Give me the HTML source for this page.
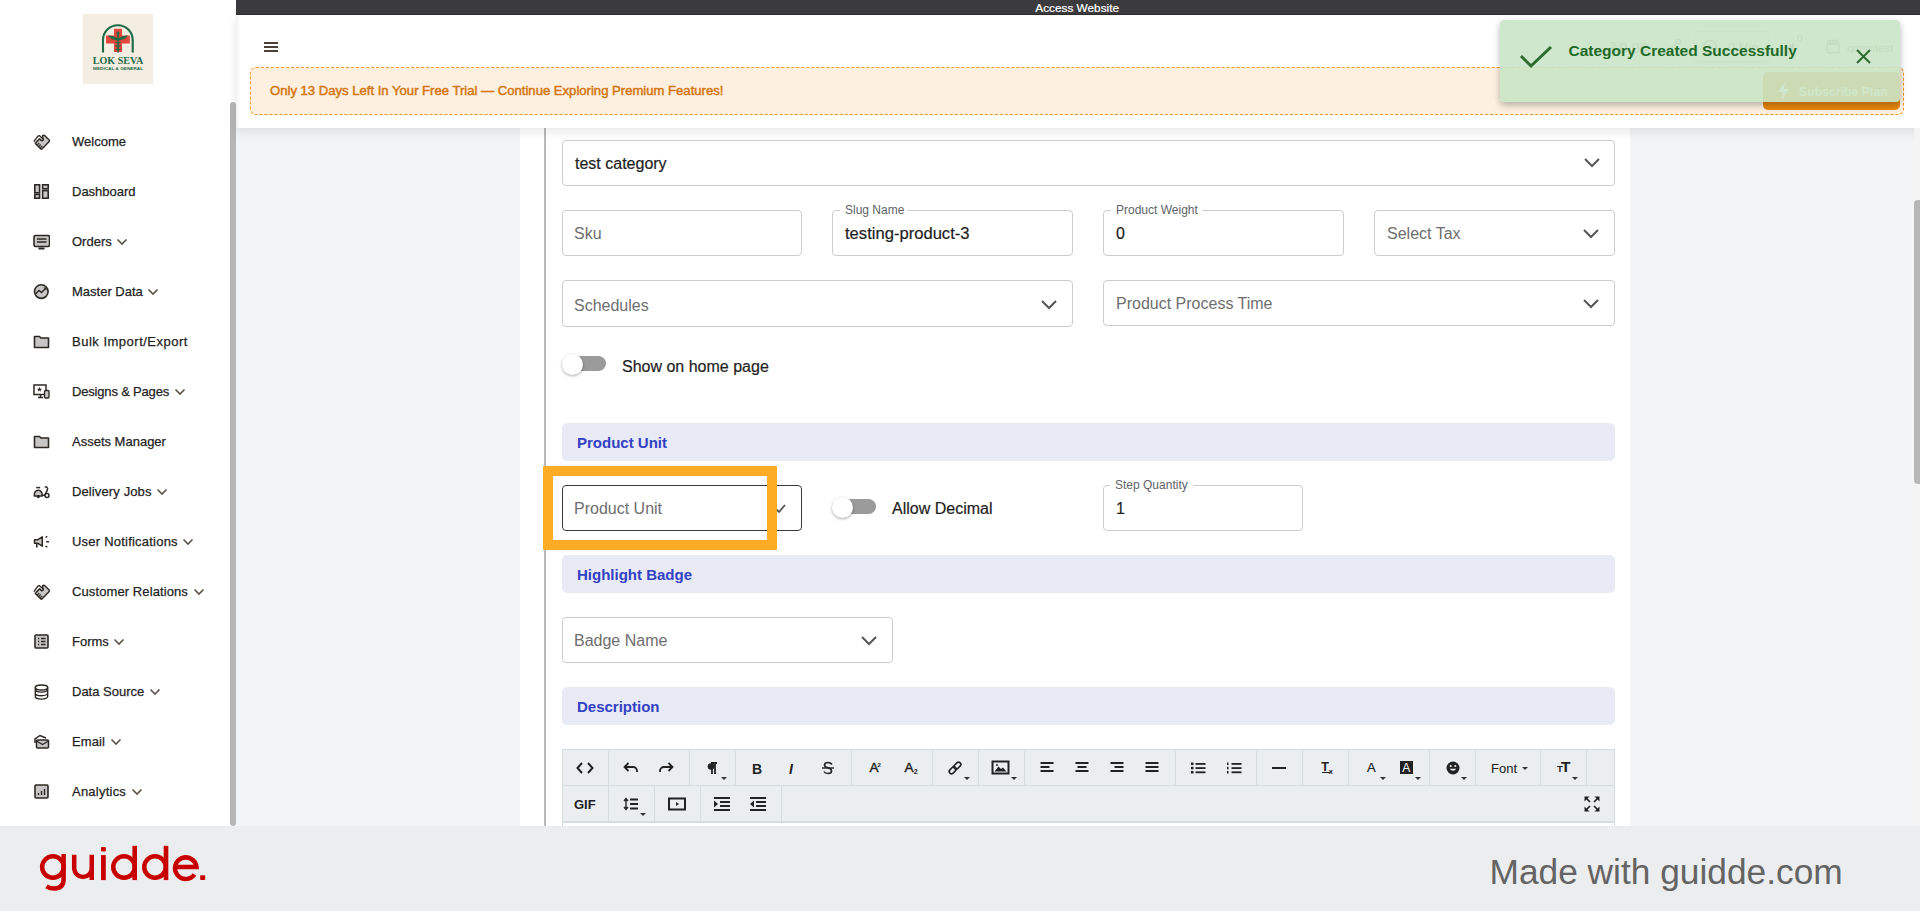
<!DOCTYPE html>
<html><head><meta charset="utf-8">
<style>
*{box-sizing:border-box;margin:0;padding:0}
html,body{width:1920px;height:911px;overflow:hidden;background:#f3f4f6;font-family:"Liberation Sans",sans-serif;position:relative}
.a{position:absolute;display:block}
.t{position:absolute;white-space:nowrap;line-height:1}
</style></head><body>

<div class="a" style="left:236px;top:128px;width:1684px;height:698px;background:#f3f4f6"></div>
<div class="a" style="left:520px;top:128px;width:1110px;height:698px;background:#fff"></div>
<div class="a" style="left:544px;top:128px;width:2px;height:698px;background:#b9b9b9"></div>
<div class="a" style="left:562px;top:140px;width:1053px;height:46px;border:1px solid #cdcdcd;border-radius:4px;background:#fff"></div>
<div class="t" style="left:575px;top:155.96px;font-size:16px;color:#1e1e1e;-webkit-text-stroke:0.2px #1e1e1e">test category</div>
<svg class="a" style="left:1583.0px;top:157.2px;" width="18" height="11" viewBox="0 0 18 11"><path d="M2 2 L9.0 9 L16 2" fill="none" stroke="#555" stroke-width="2"/></svg>
<div class="a" style="left:562px;top:210px;width:240px;height:46px;border:1px solid #cdcdcd;border-radius:4px;background:#fff"></div>
<div class="t" style="left:574px;top:226.46px;font-size:16px;color:#6e6e6e;">Sku</div>
<div class="a" style="left:832px;top:210px;width:241px;height:46px;border:1px solid #cdcdcd;border-radius:4px;background:#fff"></div>
<div class="a" style="left:840px;top:209px;width:67px;height:3px;background:#fff"></div>
<div class="t" style="left:845px;top:203.84px;font-size:12px;color:#5f6368;">Slug Name</div>
<div class="t" style="left:845px;top:225.95px;font-size:16.6px;color:#1e1e1e;-webkit-text-stroke:0.2px #1e1e1e">testing-product-3</div>
<div class="a" style="left:1103px;top:210px;width:241px;height:46px;border:1px solid #cdcdcd;border-radius:4px;background:#fff"></div>
<div class="a" style="left:1111px;top:209px;width:91px;height:3px;background:#fff"></div>
<div class="t" style="left:1116px;top:203.84px;font-size:12px;color:#5f6368;">Product Weight</div>
<div class="t" style="left:1116px;top:226.46px;font-size:16px;color:#1e1e1e;-webkit-text-stroke:0.2px #1e1e1e">0</div>
<div class="a" style="left:1374px;top:210px;width:241px;height:46px;border:1px solid #cdcdcd;border-radius:4px;background:#fff"></div>
<div class="t" style="left:1387px;top:226.46px;font-size:16px;color:#6e6e6e;">Select Tax</div>
<svg class="a" style="left:1582.0px;top:227.5px;" width="18" height="11" viewBox="0 0 18 11"><path d="M2 2 L9.0 9 L16 2" fill="none" stroke="#555" stroke-width="2"/></svg>
<div class="a" style="left:562px;top:280px;width:511px;height:47px;border:1px solid #cdcdcd;border-radius:4px;background:#fff"></div>
<div class="t" style="left:574px;top:298.46px;font-size:16px;color:#6e6e6e;">Schedules</div>
<svg class="a" style="left:1040.0px;top:298.5px;" width="18" height="11" viewBox="0 0 18 11"><path d="M2 2 L9.0 9 L16 2" fill="none" stroke="#555" stroke-width="2"/></svg>
<div class="a" style="left:1103px;top:280px;width:512px;height:46px;border:1px solid #cdcdcd;border-radius:4px;background:#fff"></div>
<div class="t" style="left:1116px;top:295.96px;font-size:16px;color:#6e6e6e;">Product Process Time</div>
<svg class="a" style="left:1582.0px;top:297.5px;" width="18" height="11" viewBox="0 0 18 11"><path d="M2 2 L9.0 9 L16 2" fill="none" stroke="#555" stroke-width="2"/></svg>
<div class="a" style="left:573px;top:355.5px;width:33px;height:15px;background:#9b9b9b;border-radius:8px"></div>
<div class="a" style="left:562px;top:353.5px;width:21px;height:21px;background:#fff;border-radius:50%;box-shadow:0 1px 3px rgba(0,0,0,.35)"></div>
<div class="t" style="left:622px;top:358.96px;font-size:16px;color:#1e1e1e;-webkit-text-stroke:0.2px #1e1e1e">Show on home page</div>
<div class="a" style="left:562px;top:423px;width:1053px;height:38px;background:#e8eaf6;border-radius:5px"></div>
<div class="t" style="left:577px;top:435.30px;font-size:15px;color:#3341c4;font-weight:bold;">Product Unit</div>
<div class="a" style="left:562px;top:555px;width:1053px;height:38px;background:#e8eaf6;border-radius:5px"></div>
<div class="t" style="left:577px;top:567.30px;font-size:15px;color:#3341c4;font-weight:bold;">Highlight Badge</div>
<div class="a" style="left:562px;top:687px;width:1053px;height:38px;background:#e8eaf6;border-radius:5px"></div>
<div class="t" style="left:577px;top:699.30px;font-size:15px;color:#3341c4;font-weight:bold;">Description</div>
<div class="a" style="left:562px;top:485px;width:240px;height:46px;border:1px solid #3a3a3a;border-radius:4px;background:#fff"></div>
<div class="t" style="left:574px;top:501.46px;font-size:16px;color:#6e6e6e;">Product Unit</div>
<svg class="a" style="left:772px;top:502px;" width="16" height="12" viewBox="0 0 16 12"><path d="M4 7 L7 10 L13 3" fill="none" stroke="#555" stroke-width="1.8"/></svg>
<div class="a" style="left:843px;top:499px;width:33px;height:15px;background:#9b9b9b;border-radius:8px"></div>
<div class="a" style="left:832px;top:497px;width:21px;height:21px;background:#fff;border-radius:50%;box-shadow:0 1px 3px rgba(0,0,0,.35)"></div>
<div class="t" style="left:892px;top:501.46px;font-size:16px;color:#1e1e1e;-webkit-text-stroke:0.2px #1e1e1e">Allow Decimal</div>
<div class="a" style="left:1103px;top:485px;width:200px;height:46px;border:1px solid #cdcdcd;border-radius:4px;background:#fff"></div>
<div class="a" style="left:1110px;top:484px;width:83px;height:3px;background:#fff"></div>
<div class="t" style="left:1115px;top:478.84px;font-size:12px;color:#5f6368;">Step Quantity</div>
<div class="t" style="left:1116px;top:501.46px;font-size:16px;color:#1e1e1e;-webkit-text-stroke:0.2px #1e1e1e">1</div>
<div class="a" style="left:543px;top:466px;width:234px;height:84px;border:10px solid #fbab24"></div>
<div class="a" style="left:562px;top:617px;width:331px;height:46px;border:1px solid #cdcdcd;border-radius:4px;background:#fff"></div>
<div class="t" style="left:574px;top:633.46px;font-size:16px;color:#6e6e6e;">Badge Name</div>
<svg class="a" style="left:860.0px;top:634.5px;" width="18" height="11" viewBox="0 0 18 11"><path d="M2 2 L9.0 9 L16 2" fill="none" stroke="#555" stroke-width="2"/></svg>
<div class="a" style="left:562px;top:749px;width:1053px;height:77px;background:#eaeef0;border:1px solid #d5dde0;border-bottom:none"></div>
<div class="a" style="left:562px;top:785px;width:1053px;height:1px;background:#d5dde0"></div>
<div class="a" style="left:562px;top:821px;width:1053px;height:2px;background:#d5dde0"></div>
<div class="a" style="left:563px;top:823px;width:1051px;height:3px;background:#fff"></div>
<div class="a" style="left:608px;top:750px;width:1px;height:35px;background:#d5dde0"></div>
<div class="a" style="left:689px;top:750px;width:1px;height:35px;background:#d5dde0"></div>
<div class="a" style="left:735px;top:750px;width:1px;height:35px;background:#d5dde0"></div>
<div class="a" style="left:851px;top:750px;width:1px;height:35px;background:#d5dde0"></div>
<div class="a" style="left:932px;top:750px;width:1px;height:35px;background:#d5dde0"></div>
<div class="a" style="left:978px;top:750px;width:1px;height:35px;background:#d5dde0"></div>
<div class="a" style="left:1024px;top:750px;width:1px;height:35px;background:#d5dde0"></div>
<div class="a" style="left:1175px;top:750px;width:1px;height:35px;background:#d5dde0"></div>
<div class="a" style="left:1256px;top:750px;width:1px;height:35px;background:#d5dde0"></div>
<div class="a" style="left:1302px;top:750px;width:1px;height:35px;background:#d5dde0"></div>
<div class="a" style="left:1348px;top:750px;width:1px;height:35px;background:#d5dde0"></div>
<div class="a" style="left:1429px;top:750px;width:1px;height:35px;background:#d5dde0"></div>
<div class="a" style="left:1475px;top:750px;width:1px;height:35px;background:#d5dde0"></div>
<div class="a" style="left:1540px;top:750px;width:1px;height:35px;background:#d5dde0"></div>
<div class="a" style="left:1586px;top:750px;width:1px;height:35px;background:#d5dde0"></div>
<div class="a" style="left:608px;top:786px;width:1px;height:35px;background:#d5dde0"></div>
<div class="a" style="left:654px;top:786px;width:1px;height:35px;background:#d5dde0"></div>
<div class="a" style="left:700px;top:786px;width:1px;height:35px;background:#d5dde0"></div>
<div class="a" style="left:781px;top:786px;width:1px;height:35px;background:#d5dde0"></div>
<svg class="a" style="left:576.0px;top:761.0px" width="18" height="14" viewBox="0 0 18 14"><path d="M6 2 L1.5 7 L6 12 M12 2 L16.5 7 L12 12" fill="none" stroke="#222" stroke-width="2"/></svg>
<svg class="a" style="left:623.0px;top:761.0px" width="16" height="14" viewBox="0 0 16 14"><path d="M2 6 h8 a4 4 0 0 1 4 4 v1" fill="none" stroke="#222" stroke-width="1.8"/><path d="M5.5 2 L1.5 6 L5.5 10" fill="none" stroke="#222" stroke-width="1.8"/></svg>
<svg class="a" style="left:658.0px;top:761.0px" width="16" height="14" viewBox="0 0 16 14"><path d="M14 6 h-8 a4 4 0 0 0 -4 4 v1" fill="none" stroke="#222" stroke-width="1.8"/><path d="M10.5 2 L14.5 6 L10.5 10" fill="none" stroke="#222" stroke-width="1.8"/></svg>
<svg class="a" style="left:706.0px;top:761.0px" width="12" height="14" viewBox="0 0 12 14"><path d="M5 2 h6 M6 2 v11 M9 2 v11" stroke="#222" stroke-width="1.8"/><circle cx="5" cy="5.5" r="3.3" fill="#222"/></svg>
<svg class="a" style="left:721px;top:777px" width="6" height="4" viewBox="0 0 6 4"><path d="M0 0 h6 l-3 3z" fill="#333"/></svg>
<svg class="a" style="left:821.0px;top:761.0px" width="14" height="14" viewBox="0 0 14 14"><path d="M11 3.5 Q9.5 1.5 7 1.5 Q3.5 1.5 3.5 4 Q3.5 6 7 6.8 Q10.5 7.6 10.5 10 Q10.5 12.5 7 12.5 Q4 12.5 3 10.5" fill="none" stroke="#222" stroke-width="1.6"/><path d="M1 7 h12" stroke="#222" stroke-width="1.4"/></svg>
<svg class="a" style="left:946.0px;top:759.0px" width="18" height="18" viewBox="0 0 18 18"><g transform="rotate(-45 9 9)" fill="none" stroke="#222" stroke-width="1.6"><rect x="1.8" y="6.7" width="7.9" height="4.6" rx="2.3"/><rect x="8.3" y="6.7" width="7.9" height="4.6" rx="2.3"/></g></svg>
<svg class="a" style="left:964px;top:777px" width="6" height="4" viewBox="0 0 6 4"><path d="M0 0 h6 l-3 3z" fill="#333"/></svg>
<svg class="a" style="left:991.0px;top:760.0px" width="20" height="16" viewBox="0 0 20 16"><rect x="1.5" y="1.5" width="16" height="12" fill="none" stroke="#222" stroke-width="2"/><path d="M3.5 11.5 L7.5 6.5 L10 9 L12 7.5 L15.5 11.5z" fill="#222"/><circle cx="6" cy="5" r="1" fill="#222"/></svg>
<svg class="a" style="left:1011px;top:777px" width="6" height="4" viewBox="0 0 6 4"><path d="M0 0 h6 l-3 3z" fill="#333"/></svg>
<svg class="a" style="left:1040.0px;top:761.0px" width="14" height="14" viewBox="0 0 14 14"><rect x="0.5" y="1" width="13" height="2" fill="#222"/><rect x="0.5" y="5" width="9" height="2" fill="#222"/><rect x="0.5" y="9" width="13" height="2" fill="#222"/></svg>
<svg class="a" style="left:1075.0px;top:761.0px" width="14" height="14" viewBox="0 0 14 14"><rect x="0.5" y="1" width="13" height="2" fill="#222"/><rect x="2.5" y="5" width="9" height="2" fill="#222"/><rect x="0.5" y="9" width="13" height="2" fill="#222"/></svg>
<svg class="a" style="left:1110.0px;top:761.0px" width="14" height="14" viewBox="0 0 14 14"><rect x="0.5" y="1" width="13" height="2" fill="#222"/><rect x="4.5" y="5" width="9" height="2" fill="#222"/><rect x="0.5" y="9" width="13" height="2" fill="#222"/></svg>
<svg class="a" style="left:1145.0px;top:761.0px" width="14" height="14" viewBox="0 0 14 14"><rect x="0.5" y="1" width="13" height="2" fill="#222"/><rect x="0.5" y="5" width="13" height="2" fill="#222"/><rect x="0.5" y="9" width="13" height="2" fill="#222"/></svg>
<svg class="a" style="left:1190.0px;top:761.0px" width="16" height="14" viewBox="0 0 16 14"><g fill="#222"><rect x="1" y="1.5" width="2.5" height="2.5"/><rect x="1" y="5.8" width="2.5" height="2.5"/><rect x="1" y="10" width="2.5" height="2.5"/><rect x="5.5" y="2" width="10" height="1.8"/><rect x="5.5" y="6.2" width="10" height="1.8"/><rect x="5.5" y="10.4" width="10" height="1.8"/></g></svg>
<svg class="a" style="left:1226.0px;top:761.0px" width="16" height="14" viewBox="0 0 16 14"><g fill="#222"><rect x="1" y="1.5" width="1.5" height="2.5"/><rect x="1" y="5.8" width="1.5" height="2.5"/><rect x="1" y="10" width="1.5" height="2.5"/><rect x="5.5" y="2" width="10" height="1.8"/><rect x="5.5" y="6.2" width="10" height="1.8"/><rect x="5.5" y="10.4" width="10" height="1.8"/></g></svg>
<svg class="a" style="left:1271.0px;top:765.0px" width="16" height="6" viewBox="0 0 16 6"><rect x="1" y="2" width="14" height="2" fill="#222"/></svg>
<svg class="a" style="left:1380px;top:777px" width="6" height="4" viewBox="0 0 6 4"><path d="M0 0 h6 l-3 3z" fill="#333"/></svg>
<svg class="a" style="left:1415px;top:777px" width="6" height="4" viewBox="0 0 6 4"><path d="M0 0 h6 l-3 3z" fill="#333"/></svg>
<svg class="a" style="left:1445.5px;top:760.6px" width="14" height="14" viewBox="0 0 14 14"><circle cx="7" cy="7" r="6.5" fill="#222"/><circle cx="4.7" cy="5" r="1.1" fill="#eaeef0"/><circle cx="9.3" cy="5" r="1.1" fill="#eaeef0"/><path d="M3.6 7.8 Q7 11.8 10.4 7.8z" fill="#eaeef0"/></svg>
<svg class="a" style="left:1461px;top:777px" width="6" height="4" viewBox="0 0 6 4"><path d="M0 0 h6 l-3 3z" fill="#333"/></svg>
<svg class="a" style="left:1522px;top:767px" width="6" height="4" viewBox="0 0 6 4"><path d="M0 0 h6 l-3 3z" fill="#333"/></svg>
<svg class="a" style="left:1572px;top:777px" width="6" height="4" viewBox="0 0 6 4"><path d="M0 0 h6 l-3 3z" fill="#333"/></svg>
<svg class="a" style="left:623.0px;top:797.0px" width="16" height="14" viewBox="0 0 16 14"><path d="M3 2 v10 M1 4 L3 1.5 L5 4 M1 10 L3 12.5 L5 10" fill="none" stroke="#222" stroke-width="1.4"/><path d="M7 2.5 h8 M7 7 h8 M7 11.5 h8" stroke="#222" stroke-width="1.8"/></svg>
<svg class="a" style="left:640px;top:813px" width="6" height="4" viewBox="0 0 6 4"><path d="M0 0 h6 l-3 3z" fill="#333"/></svg>
<svg class="a" style="left:668.0px;top:797.0px" width="18" height="14" viewBox="0 0 18 14"><rect x="1" y="1.5" width="16" height="11" fill="none" stroke="#222" stroke-width="2"/><path d="M8 5 L11 7 L8 9z" fill="#222"/></svg>
<svg class="a" style="left:713.0px;top:796.0px" width="18" height="16" viewBox="0 0 18 16"><g fill="#222"><rect x="1" y="1" width="16" height="2"/><rect x="7" y="5" width="10" height="2"/><rect x="7" y="9" width="10" height="2"/><rect x="1" y="13" width="16" height="2"/><path d="M1 4.5 L5 8 L1 11.5z"/></g></svg>
<svg class="a" style="left:749.0px;top:796.0px" width="18" height="16" viewBox="0 0 18 16"><g fill="#222"><rect x="1" y="1" width="16" height="2"/><rect x="7" y="5" width="10" height="2"/><rect x="7" y="9" width="10" height="2"/><rect x="1" y="13" width="16" height="2"/><path d="M5 4.5 L1 8 L5 11.5z"/></g></svg>
<svg class="a" style="left:1583.5px;top:795.5px" width="16" height="16" viewBox="0 0 16 16"><g fill="#222"><path d="M0.5 0.5 H5.5 L0.5 5.5z"/><path d="M15.5 0.5 H10.5 L15.5 5.5z"/><path d="M0.5 15.5 H5.5 L0.5 10.5z"/><path d="M15.5 15.5 H10.5 L15.5 10.5z"/></g><path d="M2.5 2.5 L6 6 M13.5 2.5 L10 6 M2.5 13.5 L6 10 M13.5 13.5 L10 10" stroke="#222" stroke-width="1.7"/></svg>
<div class="a" style="left:0px;top:0px;width:236px;height:826px;background:#fff"></div>
<div class="a" style="left:230px;top:102px;width:6px;height:724px;background:#b6b6b6;border-radius:3px"></div>
<div class="a" style="left:83px;top:14px;width:70px;height:70px;background:#f4ede2"></div>
<svg class="a" style="left:83px;top:14px;" width="70" height="70" viewBox="0 0 70 70">
<path d="M20 38.5 V26.1 A14.85 14.85 0 0 1 49.7 26.1 V38.5" fill="none" stroke="#1d6a47" stroke-width="2.1"/>
<path d="M31 14.7 h8 v6.9 h7.8 v7.9 h-7.8 v8.5 h-8 v-8.5 h-8 v-7.9 h8z" fill="#e2473b"/>
<path d="M25 21.5 Q30 21 35 24.5 Q40 21 45 21.5 Q42 26 35 26.5 Q28 26 25 21.5z" fill="#1d6a47"/>
<path d="M35 18.5 V38.5" stroke="#1d6a47" stroke-width="1.6"/>
<path d="M32.5 28 Q35 30 37.5 28 M32.5 31.5 Q35 33.5 37.5 31.5 M32.5 35 Q35 37 37.5 35" fill="none" stroke="#1d6a47" stroke-width="1.2"/>
<circle cx="35" cy="19" r="1.5" fill="#1d6a47"/>
<text x="35" y="49.8" text-anchor="middle" font-family="Liberation Serif" font-weight="bold" font-size="11.2" fill="#1d6a47" textLength="50.5" lengthAdjust="spacingAndGlyphs">LOK SEVA</text>
<text x="35" y="55.8" text-anchor="middle" font-family="Liberation Sans" font-weight="bold" font-size="4" fill="#1d6a47" textLength="50" lengthAdjust="spacingAndGlyphs">MEDICAL &amp; GENERAL</text>
</svg>
<svg class="a" style="left:33px;top:133.0px" width="17" height="17" viewBox="0 0 17 17"><path d="M9.6 2.6 Q10.6 1.8 11.6 2.6 L16.2 7 Q16.8 7.8 16.2 8.6 L9.2 15.8 Q8.4 16.6 7.6 15.8 L2.6 10.8 Q2 10 2.8 9.4 L6.7 5.7 L8.2 7.2 Q8.9 7.8 9.6 7.4 Q10.5 6.8 10 5.8z" fill="#c6c6c6" stroke="#2c2823" stroke-width="1.4" stroke-linejoin="round"/><path d="M0.9 8.6 L5 3.2 Q5.8 2.3 6.8 2.9 L10 5.8 Q10.5 6.8 9.6 7.4 Q8.9 7.8 8.2 7.2 L6.7 5.7 L2.8 9.6" fill="#fff" stroke="#2c2823" stroke-width="1.4" stroke-linejoin="round"/><path d="M4 12.2 L6.2 10 M5.5 13.7 L7.7 11.5 M7 15.2 L9.2 13" stroke="#2c2823" stroke-width="1.2"/></svg>
<div class="t" style="left:72px;top:135.20px;font-size:13px;color:#1f1f1f;letter-spacing:0px;-webkit-text-stroke:0.25px #1f1f1f">Welcome</div>
<svg class="a" style="left:33px;top:183.0px" width="17" height="17" viewBox="0 0 17 17"><g fill="#c6c6c6" stroke="#2c2823" stroke-width="1.6"><rect x="1.8" y="1.8" width="4.8" height="8"/><rect x="9.6" y="1.8" width="5.6" height="4"/><rect x="1.8" y="11.4" width="4.8" height="3.8"/><rect x="9.6" y="7.6" width="5.6" height="7.6"/></g></svg>
<div class="t" style="left:72px;top:185.20px;font-size:13px;color:#1f1f1f;letter-spacing:0px;-webkit-text-stroke:0.25px #1f1f1f">Dashboard</div>
<svg class="a" style="left:33px;top:233.0px" width="17" height="17" viewBox="0 0 17 17"><rect x="1" y="2.5" width="15.5" height="11" rx="1.5" fill="#c6c6c6" stroke="#2c2823" stroke-width="1.6"/><path d="M5.5 15.5 h6" stroke="#2c2823" stroke-width="2"/><path d="M4 6 h9.5 M4 9 h9.5" stroke="#2c2823" stroke-width="1.3"/></svg>
<div class="t" style="left:72px;top:235.20px;font-size:13px;color:#1f1f1f;letter-spacing:0px;-webkit-text-stroke:0.25px #1f1f1f">Orders</div>
<svg class="a" style="left:116.2px;top:237.5px" width="12" height="8" viewBox="0 0 12 8"><path d="M1.5 1.5 L6 6 L10.5 1.5" fill="none" stroke="#5b5245" stroke-width="1.6"/></svg>
<svg class="a" style="left:33px;top:283.0px" width="17" height="17" viewBox="0 0 17 17"><circle cx="8.3" cy="8.6" r="6.8" fill="#c6c6c6" stroke="#2c2823" stroke-width="1.6"/><path d="M2.5 11 L6 7.5 L8.5 9.5 L12.5 5.5" fill="none" stroke="#2c2823" stroke-width="1.4"/><path d="M10.5 4.5 h3 v3z" fill="#2c2823"/></svg>
<div class="t" style="left:72px;top:285.20px;font-size:13px;color:#1f1f1f;letter-spacing:0px;-webkit-text-stroke:0.25px #1f1f1f">Master Data</div>
<svg class="a" style="left:147.3px;top:287.5px" width="12" height="8" viewBox="0 0 12 8"><path d="M1.5 1.5 L6 6 L10.5 1.5" fill="none" stroke="#5b5245" stroke-width="1.6"/></svg>
<svg class="a" style="left:33px;top:333.0px" width="17" height="17" viewBox="0 0 17 17"><path d="M1.5 3.5 h5 l1.5 1.5 h7.5 v9.5 h-14z" fill="#c6c6c6" stroke="#2c2823" stroke-width="1.6" stroke-linejoin="round"/></svg>
<div class="t" style="left:72px;top:335.20px;font-size:13px;color:#1f1f1f;letter-spacing:0.5px;-webkit-text-stroke:0.25px #1f1f1f">Bulk Import/Export</div>
<svg class="a" style="left:33px;top:383.0px" width="17" height="17" viewBox="0 0 17 17"><rect x="1" y="2" width="12" height="9.5" fill="none" stroke="#2c2823" stroke-width="1.5"/><path d="M5 14.5 h5 M7.5 11.5 v3" stroke="#2c2823" stroke-width="1.5"/><rect x="11.5" y="7.5" width="4.5" height="7.5" rx="1" fill="#c6c6c6" stroke="#2c2823" stroke-width="1.3"/><path d="M6.5 4 l.8 1.8 h1.8 l-1.5 1.1 .6 1.8 -1.7 -1.1 -1.7 1.1 .6 -1.8 -1.5 -1.1 h1.8z" fill="#2c2823"/></svg>
<div class="t" style="left:72px;top:385.20px;font-size:13px;color:#1f1f1f;letter-spacing:-0.18px;-webkit-text-stroke:0.25px #1f1f1f">Designs &amp; Pages</div>
<svg class="a" style="left:173.6px;top:387.5px" width="12" height="8" viewBox="0 0 12 8"><path d="M1.5 1.5 L6 6 L10.5 1.5" fill="none" stroke="#5b5245" stroke-width="1.6"/></svg>
<svg class="a" style="left:33px;top:433.0px" width="17" height="17" viewBox="0 0 17 17"><path d="M1.5 3.5 h5 l1.5 1.5 h7.5 v9.5 h-14z" fill="#c6c6c6" stroke="#2c2823" stroke-width="1.6" stroke-linejoin="round"/></svg>
<div class="t" style="left:72px;top:435.20px;font-size:13px;color:#1f1f1f;letter-spacing:0px;-webkit-text-stroke:0.25px #1f1f1f">Assets Manager</div>
<svg class="a" style="left:33px;top:483.0px" width="17" height="17" viewBox="0 0 17 17"><path d="M3.2 4.6 H7.2" stroke="#2c2823" stroke-width="1.5"/><path d="M1.2 13 Q1.2 7.2 5.3 7.2 Q9.3 7.2 9.3 13z" fill="#c6c6c6" stroke="#2c2823" stroke-width="1.5" stroke-linejoin="round"/><circle cx="5.3" cy="13.6" r="1.6" fill="#2c2823"/><path d="M9.3 12.2 H11.8 L14.3 7.2 Q15.2 5 13.8 4 H11.8" fill="none" stroke="#2c2823" stroke-width="1.5" stroke-linejoin="round"/><circle cx="14" cy="12.6" r="2" fill="#fff" stroke="#2c2823" stroke-width="1.5"/></svg>
<div class="t" style="left:72px;top:485.20px;font-size:13px;color:#1f1f1f;letter-spacing:0.12px;-webkit-text-stroke:0.25px #1f1f1f">Delivery Jobs</div>
<svg class="a" style="left:156.1px;top:487.5px" width="12" height="8" viewBox="0 0 12 8"><path d="M1.5 1.5 L6 6 L10.5 1.5" fill="none" stroke="#5b5245" stroke-width="1.6"/></svg>
<svg class="a" style="left:33px;top:533.0px" width="17" height="17" viewBox="0 0 17 17"><path d="M1.5 6.8 H4.5 L9.3 3.8 V13.2 L4.5 10.2 H1.5z" fill="#c6c6c6" stroke="#2c2823" stroke-width="1.5" stroke-linejoin="round"/><path d="M3.8 10 V14.6" stroke="#2c2823" stroke-width="1.6"/><path d="M12.5 4.5 L14.3 3.2 M13.2 8.8 H16 M12.5 13 L14.3 14.3" stroke="#2c2823" stroke-width="1.4"/></svg>
<div class="t" style="left:72px;top:535.20px;font-size:13px;color:#1f1f1f;letter-spacing:0.22px;-webkit-text-stroke:0.25px #1f1f1f">User Notifications</div>
<svg class="a" style="left:182.4px;top:537.5px" width="12" height="8" viewBox="0 0 12 8"><path d="M1.5 1.5 L6 6 L10.5 1.5" fill="none" stroke="#5b5245" stroke-width="1.6"/></svg>
<svg class="a" style="left:33px;top:583.0px" width="17" height="17" viewBox="0 0 17 17"><path d="M9.6 2.6 Q10.6 1.8 11.6 2.6 L16.2 7 Q16.8 7.8 16.2 8.6 L9.2 15.8 Q8.4 16.6 7.6 15.8 L2.6 10.8 Q2 10 2.8 9.4 L6.7 5.7 L8.2 7.2 Q8.9 7.8 9.6 7.4 Q10.5 6.8 10 5.8z" fill="#c6c6c6" stroke="#2c2823" stroke-width="1.4" stroke-linejoin="round"/><path d="M0.9 8.6 L5 3.2 Q5.8 2.3 6.8 2.9 L10 5.8 Q10.5 6.8 9.6 7.4 Q8.9 7.8 8.2 7.2 L6.7 5.7 L2.8 9.6" fill="#fff" stroke="#2c2823" stroke-width="1.4" stroke-linejoin="round"/><path d="M4 12.2 L6.2 10 M5.5 13.7 L7.7 11.5 M7 15.2 L9.2 13" stroke="#2c2823" stroke-width="1.2"/></svg>
<div class="t" style="left:72px;top:585.20px;font-size:13px;color:#1f1f1f;letter-spacing:0.1px;-webkit-text-stroke:0.25px #1f1f1f">Customer Relations</div>
<svg class="a" style="left:192.5px;top:587.5px" width="12" height="8" viewBox="0 0 12 8"><path d="M1.5 1.5 L6 6 L10.5 1.5" fill="none" stroke="#5b5245" stroke-width="1.6"/></svg>
<svg class="a" style="left:33px;top:633.0px" width="17" height="17" viewBox="0 0 17 17"><rect x="2" y="2" width="13" height="13" rx="1" fill="#c6c6c6" stroke="#2c2823" stroke-width="1.6"/><path d="M5 5.5 h1.2 M8 5.5 h4.5 M5 8.5 h1.2 M8 8.5 h4.5 M5 11.5 h1.2 M8 11.5 h4.5" stroke="#2c2823" stroke-width="1.3"/></svg>
<div class="t" style="left:72px;top:635.20px;font-size:13px;color:#1f1f1f;letter-spacing:0px;-webkit-text-stroke:0.25px #1f1f1f">Forms</div>
<svg class="a" style="left:113.3px;top:637.5px" width="12" height="8" viewBox="0 0 12 8"><path d="M1.5 1.5 L6 6 L10.5 1.5" fill="none" stroke="#5b5245" stroke-width="1.6"/></svg>
<svg class="a" style="left:33px;top:683.0px" width="17" height="17" viewBox="0 0 17 17"><ellipse cx="8.5" cy="4.6" rx="6.2" ry="2.5" fill="none" stroke="#2c2823" stroke-width="1.5"/><path d="M2.3 4.6 V13.6 A6.2 2.5 0 0 0 14.7 13.6 V4.6 M2.3 6.6 A6.2 2.5 0 0 0 14.7 6.6 M2.3 10.2 A6.2 2.5 0 0 0 14.7 10.2" fill="none" stroke="#2c2823" stroke-width="1.4"/></svg>
<div class="t" style="left:72px;top:685.20px;font-size:13px;color:#1f1f1f;letter-spacing:0px;-webkit-text-stroke:0.25px #1f1f1f">Data Source</div>
<svg class="a" style="left:148.8px;top:687.5px" width="12" height="8" viewBox="0 0 12 8"><path d="M1.5 1.5 L6 6 L10.5 1.5" fill="none" stroke="#5b5245" stroke-width="1.6"/></svg>
<svg class="a" style="left:33px;top:733.0px" width="17" height="17" viewBox="0 0 17 17"><path d="M2 10 v-4 l5 -3.5 l6 2.5" fill="none" stroke="#2c2823" stroke-width="1.5"/><rect x="3.5" y="7" width="12" height="8" rx="1" fill="#c6c6c6" stroke="#2c2823" stroke-width="1.5"/><path d="M3.5 8 l6 3.5 l6 -3.5" fill="none" stroke="#2c2823" stroke-width="1.3"/></svg>
<div class="t" style="left:72px;top:735.20px;font-size:13px;color:#1f1f1f;letter-spacing:0.1px;-webkit-text-stroke:0.25px #1f1f1f">Email</div>
<svg class="a" style="left:109.5px;top:737.5px" width="12" height="8" viewBox="0 0 12 8"><path d="M1.5 1.5 L6 6 L10.5 1.5" fill="none" stroke="#5b5245" stroke-width="1.6"/></svg>
<svg class="a" style="left:33px;top:783.0px" width="17" height="17" viewBox="0 0 17 17"><rect x="2" y="2" width="13" height="13" rx="1" fill="#c6c6c6" stroke="#2c2823" stroke-width="1.6"/><path d="M5.5 12 v-2 M8.5 12 v-4 M11.5 12 v-6" stroke="#2c2823" stroke-width="1.4"/></svg>
<div class="t" style="left:72px;top:785.20px;font-size:13px;color:#1f1f1f;letter-spacing:0.23px;-webkit-text-stroke:0.25px #1f1f1f">Analytics</div>
<svg class="a" style="left:130.6px;top:787.5px" width="12" height="8" viewBox="0 0 12 8"><path d="M1.5 1.5 L6 6 L10.5 1.5" fill="none" stroke="#5b5245" stroke-width="1.6"/></svg>
<div class="a" style="left:236px;top:15px;width:1684px;height:113px;background:#fff;box-shadow:0 4px 10px rgba(0,0,0,.09)"></div>
<div class="a" style="left:236px;top:0px;width:1684px;height:15px;background:#3b3b3d;border-bottom:1px solid #2c2c2e"></div>
<div class="a" style="left:236px;top:16px;width:4px;height:112px;background:linear-gradient(to right,#eff0f3,#fff)"></div>
<div class="t" style="left:1035.3px;top:2.91px;font-size:11.8px;color:#fff;-webkit-text-stroke:0.2px #fff">Access Website</div>
<div class="a" style="left:264px;top:42px;width:14px;height:2px;background:#4a4238"></div>
<div class="a" style="left:264px;top:46px;width:14px;height:2px;background:#4a4238"></div>
<div class="a" style="left:264px;top:50px;width:14px;height:2px;background:#4a4238"></div>
<div class="a" style="left:250px;top:67px;width:1654px;height:48px;background:#fdf0e0;border:1.5px dashed #f29a12;border-radius:6px"></div>
<div class="t" style="left:270px;top:83.91px;font-size:13.1px;color:#d4740c;-webkit-text-stroke:0.45px #d4740c">Only 13 Days Left In Your Free Trial &mdash; Continue Exploring Premium Features!</div>
<div class="a" style="left:1763px;top:72px;width:137px;height:38px;background:#e8870c;border-radius:5px"></div>
<svg class="a" style="left:1776px;top:81px;" width="15" height="20" viewBox="0 0 15 20"><path d="M9 1 L2 11 H7 L5.5 19 L13 8 H8z" fill="#fff"/></svg>
<div class="t" style="left:1799px;top:85.59px;font-size:12.3px;color:#fff;font-weight:bold;">Subscribe Plan</div>
<div class="t" style="left:1610px;top:39.80px;font-size:15px;color:#8a8a8a;">&#8377;0.00</div>
<svg class="a" style="left:1666px;top:38px;" width="16" height="16" viewBox="0 0 16 16"><circle cx="12.5" cy="3.5" r="2.2" fill="none" stroke="#8a8a8a" stroke-width="1.4"/><circle cx="3.5" cy="12.5" r="2.2" fill="none" stroke="#8a8a8a" stroke-width="1.4"/><path d="M5 11 L11 5" stroke="#8a8a8a" stroke-width="1.4"/></svg>
<div class="a" style="left:1694px;top:31px;width:76px;height:31px;border:1px solid #d8d8d8;border-radius:5px"></div>
<svg class="a" style="left:1702px;top:39px;" width="16" height="16" viewBox="0 0 16 16"><circle cx="8" cy="8" r="6.5" fill="none" stroke="#8a8a8a" stroke-width="1.5"/><path d="M8 4 V8 L10.5 10" fill="none" stroke="#8a8a8a" stroke-width="1.4"/></svg>
<div class="t" style="left:1728px;top:42.00px;font-size:12.4px;color:#8a8a8a;">0 Min</div>
<svg class="a" style="left:1785px;top:41px;" width="12" height="12" viewBox="0 0 12 12"><path d="M2 6 L9 2 V10z" fill="#8a8a8a"/></svg>
<div class="t" style="left:1797px;top:33.53px;font-size:10px;color:#8a8a8a;">0</div>
<svg class="a" style="left:1825px;top:39px;" width="16" height="15" viewBox="0 0 16 15"><path d="M2 5 L3.5 1.5 H12.5 L14 5 V13.5 H2z M2 5 H14 M5.5 1.5 V5 M8 1.5 V5 M10.5 1.5 V5" fill="none" stroke="#8a8a8a" stroke-width="1.3"/></svg>
<div class="t" style="left:1847px;top:42.85px;font-size:11.4px;color:#8a8a8a;">qcomtest</div>
<div class="a" style="left:1500px;top:20px;width:400px;height:82px;background:rgba(202,228,199,0.9);border-radius:4px;box-shadow:0 3px 7px rgba(0,0,0,.28)"></div>
<svg class="a" style="left:1518px;top:44px;" width="36" height="26" viewBox="0 0 36 26"><path d="M3 12 L13 22 L33 3" fill="none" stroke="#2e6b30" stroke-width="3"/></svg>
<div class="t" style="left:1568.5px;top:42.78px;font-size:15.5px;color:#226a28;font-weight:bold;">Category Created Successfully</div>
<svg class="a" style="left:1855px;top:48px;" width="17" height="17" viewBox="0 0 17 17"><path d="M2 2 L15 15 M15 2 L2 15" fill="none" stroke="#2e6b30" stroke-width="2"/></svg>
<div class="a" style="left:1914px;top:128px;width:6px;height:698px;background:#f4f4f4"></div>
<div class="a" style="left:1914px;top:200px;width:8px;height:284px;background:#b6b6b6;border-radius:4px"></div>
<div class="a" style="left:0px;top:826px;width:1920px;height:85px;background:#ecedef"></div>
<svg class="a" style="left:30px;top:840px;" width="190" height="55" viewBox="30 840 190 55"><g fill="none" stroke="#c80000" stroke-width="4.5">
<circle cx="52.9" cy="867.1" r="10.75"/>
<path d="M63.6 854.1 V879 Q63.6 888.5 54.5 888.5 Q50 888.5 46.5 886.3"/>
<path d="M74.2 854.8 V868.75 A8.8 8.8 0 0 0 91.75 868.75 M91.75 854.8 V880.1"/>
<circle cx="124" cy="867.1" r="10.75"/>
<circle cx="155" cy="867.1" r="10.75"/>
<path d="M194.5 874.5 A10.75 10.75 0 1 1 196.5 867.1 H175"/>
</g>
<g fill="#c80000"><rect x="101" y="847" width="4.8" height="4.6" rx="0.8"/><rect x="101" y="855.1" width="4.8" height="25"/><rect x="132.4" y="845.8" width="4.6" height="34.3"/><rect x="163.7" y="845.8" width="4.6" height="34.3"/><rect x="200.2" y="875.3" width="5" height="4.8" rx="0.8"/></g></svg>
<div class="t" style="left:1489.5px;top:853.82px;font-size:35.3px;color:#646464;">Made with guidde.com</div>
<div class="t" style="left:752px;top:762.15px;font-size:14px;color:#222;font-weight:bold;">B</div>
<div class="t" style="left:789px;top:762.15px;font-size:14px;color:#222;font-style:italic;font-weight:bold">I</div>
<div class="t" style="left:869.5px;top:761.07px;font-size:13.5px;color:#222;-webkit-text-stroke:0.4px #222">A</div>
<div class="t" style="left:877.4px;top:761.72px;font-size:6px;color:#222;font-weight:bold;">2</div>
<div class="t" style="left:904.5px;top:761.07px;font-size:13.5px;color:#222;-webkit-text-stroke:0.4px #222">A</div>
<div class="t" style="left:913.8px;top:768.27px;font-size:7px;color:#222;font-weight:bold;">2</div>
<div class="t" style="left:1321.2px;top:761.22px;font-size:12.5px;color:#222;font-weight:bold;">T</div>
<div class="t" style="left:1328.8px;top:767.65px;font-size:7.5px;color:#222;font-weight:bold;">x</div>
<div class="a" style="left:1321.5px;top:771.5px;width:8px;height:1.3px;background:#222"></div>
<div class="t" style="left:1367px;top:761.40px;font-size:13px;color:#222;-webkit-text-stroke:0.2px #222">A</div>
<div class="a" style="left:1400px;top:761px;width:13px;height:12.7px;background:#222"></div>
<div class="t" style="left:1402.2px;top:761.94px;font-size:12px;color:#fff;">A</div>
<div class="t" style="left:1491px;top:761.90px;font-size:13px;color:#222;">Font</div>
<div class="t" style="left:1557px;top:764.46px;font-size:9.5px;color:#222;font-weight:bold;">T</div>
<div class="t" style="left:1561px;top:759.38px;font-size:15.5px;color:#222;font-weight:bold;">T</div>
<div class="t" style="left:574px;top:798.00px;font-size:13px;color:#222;font-weight:bold;">GIF</div>
</body></html>
